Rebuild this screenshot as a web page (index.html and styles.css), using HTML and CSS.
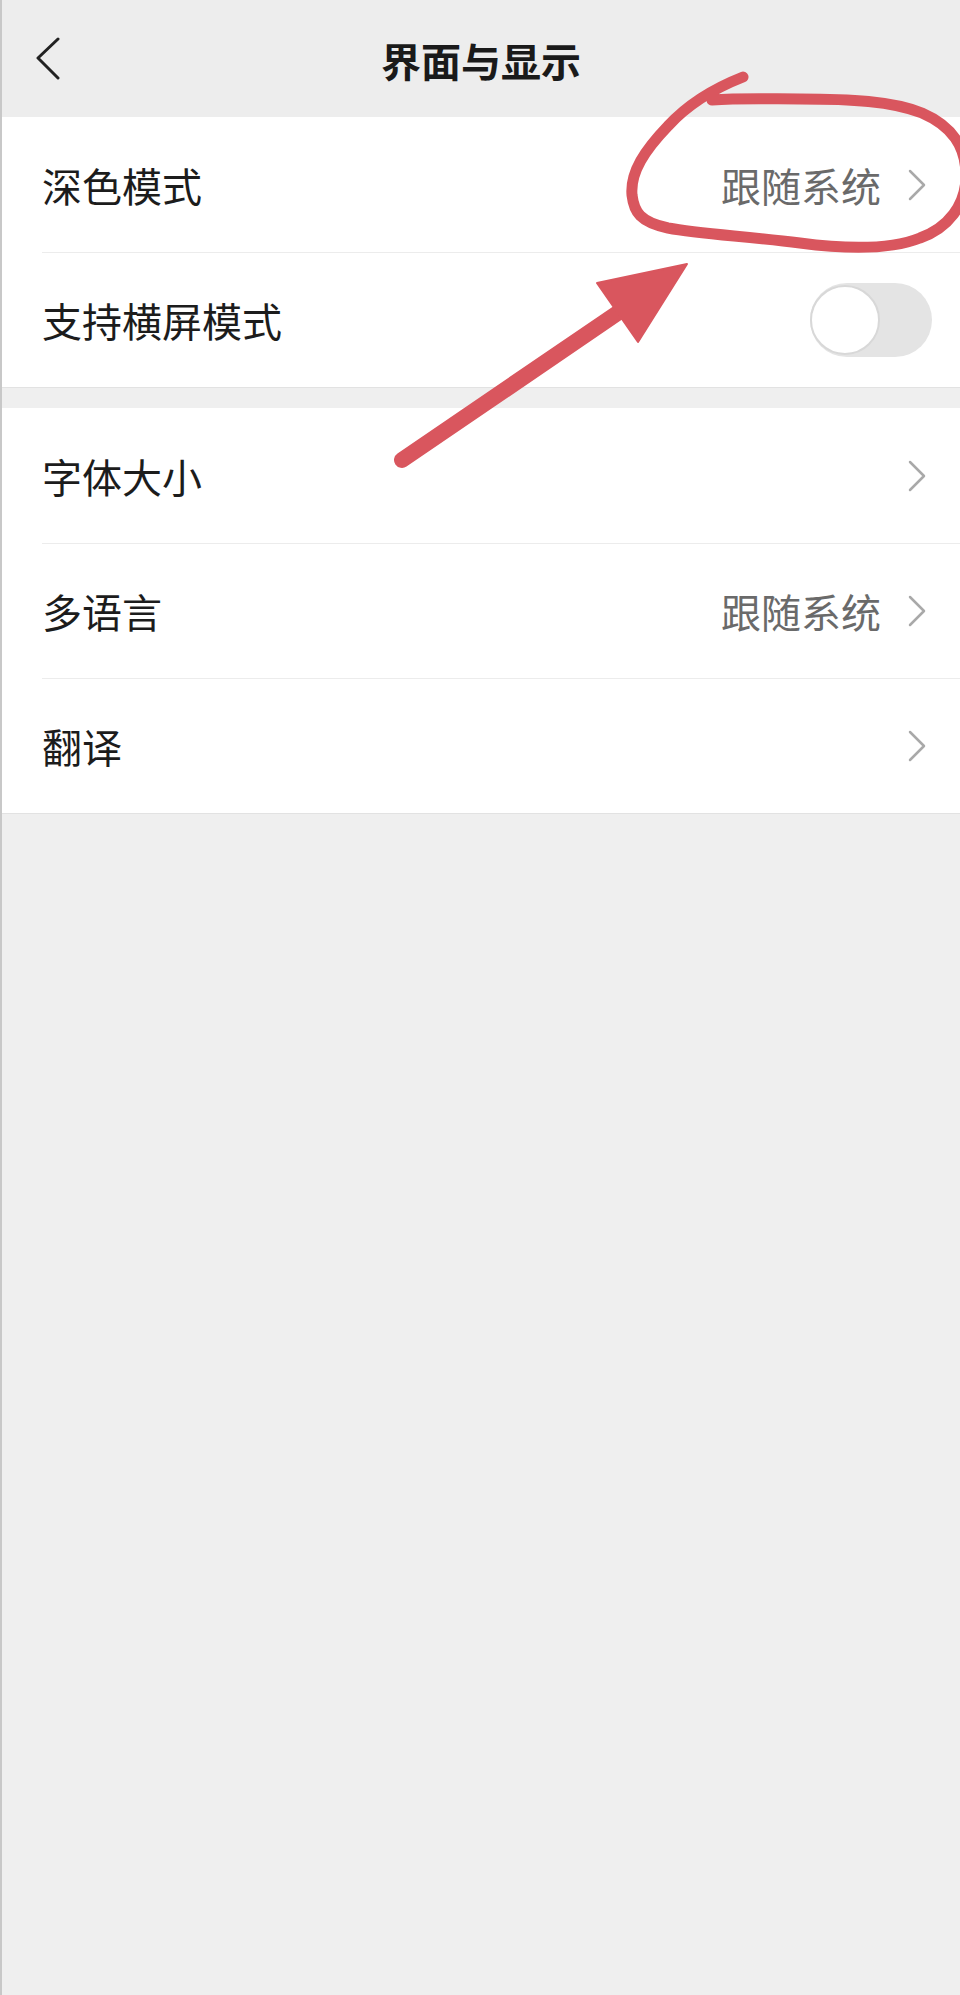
FILE: index.html
```html
<!DOCTYPE html>
<html>
  <head>
    <title>界面与显示</title>
    <link rel="stylesheet" href="styles.css">
  </head>
  <body>
    <div class="page">
      <header class="topbar">
        <a class="back" href="#">
          <svg width="26" height="44" viewBox="0 0 26 44"><path d="M22 2 L2 21 L22 41" fill="none" stroke="#222" stroke-width="3" stroke-linecap="round" stroke-linejoin="round"/></svg>
        </a>
        <h1>界面与显示</h1>
      </header>

      <section class="group">
        <div class="row">
          <span class="label">深色模式</span>
          <span class="value">跟随系统</span>
          <svg class="chev" width="20" height="32" viewBox="0 0 20 32"><path d="M3 2 L17 16 L3 30" fill="none" stroke="#a9a9a9" stroke-width="2.5" stroke-linecap="round" stroke-linejoin="round"/></svg>
        </div>
        <div class="row">
          <span class="label">支持横屏模式</span>
          <span class="switch"><span class="knob"></span></span>
        </div>
      </section>

      <section class="group">
        <div class="row">
          <span class="label">字体大小</span>
          <svg class="chev" width="20" height="32" viewBox="0 0 20 32"><path d="M3 2 L17 16 L3 30" fill="none" stroke="#a9a9a9" stroke-width="2.5" stroke-linecap="round" stroke-linejoin="round"/></svg>
        </div>
        <div class="row">
          <span class="label">多语言</span>
          <span class="value">跟随系统</span>
          <svg class="chev" width="20" height="32" viewBox="0 0 20 32"><path d="M3 2 L17 16 L3 30" fill="none" stroke="#a9a9a9" stroke-width="2.5" stroke-linecap="round" stroke-linejoin="round"/></svg>
        </div>
        <div class="row">
          <span class="label">翻译</span>
          <svg class="chev" width="20" height="32" viewBox="0 0 20 32"><path d="M3 2 L17 16 L3 30" fill="none" stroke="#a9a9a9" stroke-width="2.5" stroke-linecap="round" stroke-linejoin="round"/></svg>
        </div>
      </section>

      <!-- hand-drawn red markup over the screenshot -->
      <svg class="markup" width="960" height="500" viewBox="0 0 960 500">
        <path d="M743 77 C715 88 690 102 668 126 C645 150 630 172 632 195 C634 212 640 222 668 228 C700 234 745 236 800 243 C845 249 890 250 920 238 C948 228 966 205 966 176 C966 146 952 126 922 113 C892 101 850 99 800 99 C770 99 740 98 712 100" fill="none" stroke="#d9565e" stroke-width="11" stroke-linecap="round" stroke-linejoin="round"/>
        <line x1="402" y1="460" x2="622" y2="310" stroke="#d9565e" stroke-width="16" stroke-linecap="round"/>
        <polygon points="687,264 597,283 638,342" fill="#d9565e" stroke="#d9565e" stroke-width="2" stroke-linejoin="round"/>
      </svg>
    </div>
  </body>
</html>
```

FILE: styles.css
```css
body{
    margin: 0;
    background: #efefef;
    font-family: "Noto Sans CJK SC", "Noto Sans", sans-serif;
    color: #1c1c1c;
}
.page{
    position: relative;
    width: 960px;
    min-height: 1995px;
    border-left: 2px solid #c8c8c8;
    box-sizing: border-box;
    background: #efefef;
    overflow: hidden;
}
.topbar{
    position: relative;
    height: 117px;
    display: flex;
    align-items: center;
    justify-content: center;
    background: #ededed;
}
.topbar h1{
    margin: 0;
    font-size: 40px;
    font-weight: 700;
    line-height: 1;
    padding-top: 2px;
    color: #1a1a1a;
}
.back{
    position: absolute;
    left: 34px;
    top: 37px;
    display: block;
}
.back svg{
    display: block;
}
.group{
    background: #fff;
    border-bottom: 1px solid #e2e2e2;
    margin-bottom: 20px;
}
.row{
    height: 135px;
    box-sizing: border-box;
    display: flex;
    align-items: center;
    padding: 0 33px 0 0;
    margin-left: 40px;
}
.row + .row{
    border-top: 1px solid #ececec;
}
.label{
    flex: 1;
    font-size: 40px;
    line-height: 1;
}
.value{
    font-size: 40px;
    line-height: 1;
    color: #6a6a6a;
    margin-right: 26px;
}
.chev{
    display: block;
}
.switch{
    position: relative;
    width: 122px;
    height: 74px;
    border-radius: 37px;
    background: #e4e4e4;
    margin-right: -5px;
}
.knob{
    position: absolute;
    left: 0;
    top: 2px;
    width: 66px;
    height: 66px;
    border-radius: 50%;
    background: #fff;
    border: 2px solid #d8d8d8;
}
.markup{
    position: absolute;
    left: -2px;
    top: 0;
    pointer-events: none;
}
```
